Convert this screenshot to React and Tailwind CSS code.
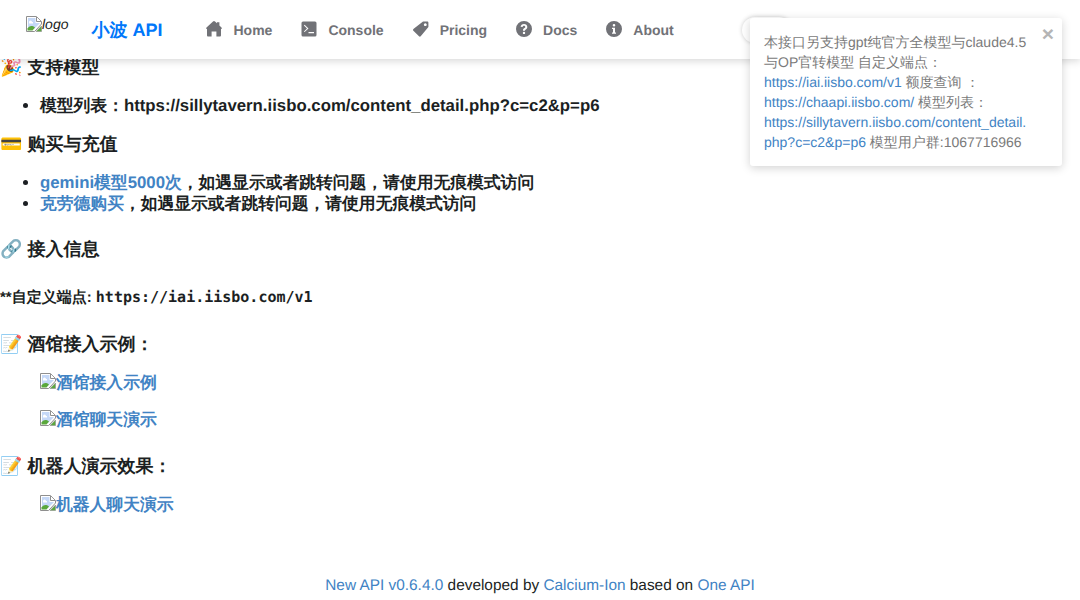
import React from "react";

const Broken = ({ className = "" }) => (
  <svg viewBox="0 0 16 16" width="16" height="16" className={"inline-block shrink-0 " + className}>
    <path d="M0.500 15.500V0.500H10.500L15.500 5.500V8L10 14L8.500 15.500Z" fill="#fff" stroke="#8f8f8f" />
    <path d="M10.500 1V5.500H15" fill="#fff" stroke="#8f8f8f" />
    <path d="M2 2H9.500V7H14L8 13H2Z" fill="#c5d8f7" />
    <path d="M3 6a1.500 1.500 0 0 1 3 0h1v1.500H3Z" fill="#fff" />
    <path d="M1.500 14.500V12.500C4 9.500 6 9.500 9 11.500L6.500 14.500Z" fill="#5aa83c" />
    <path d="M10 15.500H15.500V10Z" fill="#5aa83c" stroke="#8f8f8f" strokeWidth="0.6" />
  </svg>
);

const c = "fill-[#717277]";
const HomeI = () => (
  <svg viewBox="0 0 16 16" width="16" height="16" className={c}>
    <path d="M7 .5a1.500 1.500 0 0 1 2 0L11 2.300V1.200h2.400v3.300l2.100 1.900c.6.600.5 1.600-.4 1.600H15v6.200c0 .8-.5 1.300-1.200 1.300H10.400V10.500H5.600V15.500H2.200C1.500 15.500 1 15 1 14.200V8H.9C0 8-.1 7 .5 6.400Z" />
  </svg>
);
const TermI = () => (
  <svg viewBox="0 0 16 16" width="16" height="16" className={c}>
    <path fillRule="evenodd" d="M2 .5h12A1.500 1.500 0 0 1 15.500 2v12a1.500 1.500 0 0 1-1.500 1.500H2A1.500 1.500 0 0 1 .5 14V2A1.500 1.500 0 0 1 2 .5ZM3.600 3.700 2.900 4.400 6 7.400 2.900 10.400 3.600 11.100 7.500 7.400ZM7.500 11V12.300H13V11Z" />
  </svg>
);
const TagI = () => (
  <svg viewBox="0 0 16 16" width="16" height="16" className={c}>
    <path fillRule="evenodd" d="M10 .6h4.200c.7 0 1.200.5 1.200 1.200V6L7.700 15.300c-.5.500-1.200.500-1.700 0L.4 9.800c-.5-.5-.5-1.200 0-1.700ZM12.300 2.300a1.400 1.400 0 1 0 .01 0Z" />
  </svg>
);
const HelpI = () => (
  <svg viewBox="0 0 16 16" width="16" height="16" className={c}>
    <path fillRule="evenodd" d="M8 0a8 8 0 1 1 0 16A8 8 0 0 1 8 0ZM8 3C6.100 3 4.800 4.100 4.600 5.800L6.600 6C6.700 5.200 7.200 4.800 8 4.800 8.700 4.800 9.300 5.200 9.300 5.900 9.300 6.400 9 6.700 8.400 7.100 7.500 7.700 7 8.200 7 9.300V9.800H9V9.500C9 9 9.200 8.800 9.800 8.400 10.700 7.800 11.300 7.100 11.300 5.900 11.300 4.100 9.800 3 8 3ZM8 10.700A1.200 1.200 0 1 0 8 13.100 1.200 1.200 0 0 0 8 10.700Z" />
  </svg>
);
const InfoI = () => (
  <svg viewBox="0 0 16 16" width="16" height="16" className={c}>
    <path fillRule="evenodd" d="M8 0a8 8 0 1 1 0 16A8 8 0 0 1 8 0ZM8 2.900A1.300 1.300 0 1 0 8 5.500 1.300 1.300 0 0 0 8 2.900ZM6 6.700V8H7V11.400H6V12.800H10V11.400H9V6.700Z" />
  </svg>
);

const nav = [
  [HomeI, "Home"],
  [TermI, "Console"],
  [TagI, "Pricing"],
  [HelpI, "Docs"],
  [InfoI, "About"],
];

const A = ({ children }) => <a className="text-[#4183c4]">{children}</a>;

const H = ({ children, cls }) => (
  <h3 className={"text-[18px] leading-[23px] font-bold text-[#1c1f23] " + cls}>{children}</h3>
);

const Figure = ({ children, cls }) => (
  <p className={"flex items-center pl-10 text-[16.8px] leading-[22px] font-bold text-[#4183c4] " + cls}>
    <Broken className="-mt-[5px]" />
    <span>{children}</span>
  </p>
);

export default function App() {
  return (
    <div className="relative h-[600px] w-[1080px] overflow-hidden bg-white text-[#1c1f23] [text-rendering:geometricPrecision]" style={{ fontFamily: '"Liberation Sans"' }}>
      <header className="relative z-10 flex h-[59px] items-start bg-white shadow-[0_2px_8px_rgba(0,0,0,0.16)]">
        <div className="mt-[16px] ml-[26px] flex items-start text-[14px] leading-[17px] text-[#1c1f23] italic">
          <Broken />
          <span>logo</span>
        </div>
        <span className="mt-[19px] ml-[23px] text-[18px] leading-[23px] font-bold text-[#0077fa]">小波 API</span>
        <nav className="mt-[21px] ml-[43px] flex gap-[28px]">
          {nav.map(([I, t]) => (
            <div key={t} className="flex h-[18px] items-center gap-[11px] text-[14px] leading-[18px] font-bold text-[#717277]">
              <span className="-mt-[2px] ml-[1px]"><I /></span>
              <span>{t}</span>
            </div>
          ))}
        </nav>
        <div className="absolute top-[17px] left-[742px] h-[26px] w-[50px] rounded-full bg-white shadow-[0_0_4px_rgba(0,0,0,0.2)]" />
      </header>

      <main className="-mt-[3px]">
        <H cls="">🎉 支持模型</H>
        <ul className="mt-[16px] list-disc pl-10 text-[16.8px] leading-[22px] font-bold">
          <li>模型列表：https://sillytavern.iisbo.com/content_detail.php?c=c2&amp;p=p6</li>
        </ul>
        <H cls="mt-[16px]">💳 购买与充值</H>
        <ul className="mt-[18px] list-disc pl-10 text-[16.8px] leading-[18px] font-bold">
          <li><A>gemini模型5000次</A>，如遇显示或者跳转问题，请使用无痕模式访问</li>
          <li className="mt-[3px]"><A>克劳德购买</A>，如遇显示或者跳转问题，请使用无痕模式访问</li>
        </ul>
        <H cls="mt-[25px]">🔗 接入信息</H>
        <p className="mt-[25px] text-[15px] leading-[22px] font-semibold">
          **自定义端点: <code style={{ fontFamily: '"DejaVu Sans Mono", monospace' }}>https://iai.iisbo.com/v1</code>
        </p>
        <H cls="mt-[24px]">📝 酒馆接入示例：</H>
        <Figure cls="mt-[16px]">酒馆接入示例</Figure>
        <Figure cls="mt-[15px]">酒馆聊天演示</Figure>
        <H cls="mt-[24px]">📝 机器人演示效果：</H>
        <Figure cls="mt-[16px]">机器人聊天演示</Figure>
      </main>

      <footer className="absolute right-0 bottom-[5px] left-0 text-center text-[15.4px] leading-[18px] text-[#1c1f23]">
        <A>New API v0.6.4.0</A> developed by <A>Calcium-Ion</A> based on <A>One API</A>
      </footer>

      <div className="absolute top-[18px] left-[750px] z-20 h-[148px] w-[312px] rounded-[3px] bg-white py-[14px] pl-[14px] text-[14px] leading-[20px] whitespace-nowrap text-[#7a7a7a] shadow-[0_2px_10px_rgba(0,0,0,0.18)]">
        <button className="absolute top-[7px] right-[8px] text-[21px] leading-[18px] font-bold text-[#b5b5b5]">×</button>
        <p>本接口另支持gpt纯官方全模型与claude4.5</p>
        <p>与OP官转模型 自定义端点：</p>
        <p><A>https://iai.iisbo.com/v1</A> 额度查询 ：</p>
        <p><A>https://chaapi.iisbo.com/</A> 模型列表：</p>
        <p><A>https://sillytavern.iisbo.com/content_detail.</A></p>
        <p><A>php?c=c2&amp;p=p6</A> 模型用户群:1067716966</p>
      </div>
    </div>
  );
}
